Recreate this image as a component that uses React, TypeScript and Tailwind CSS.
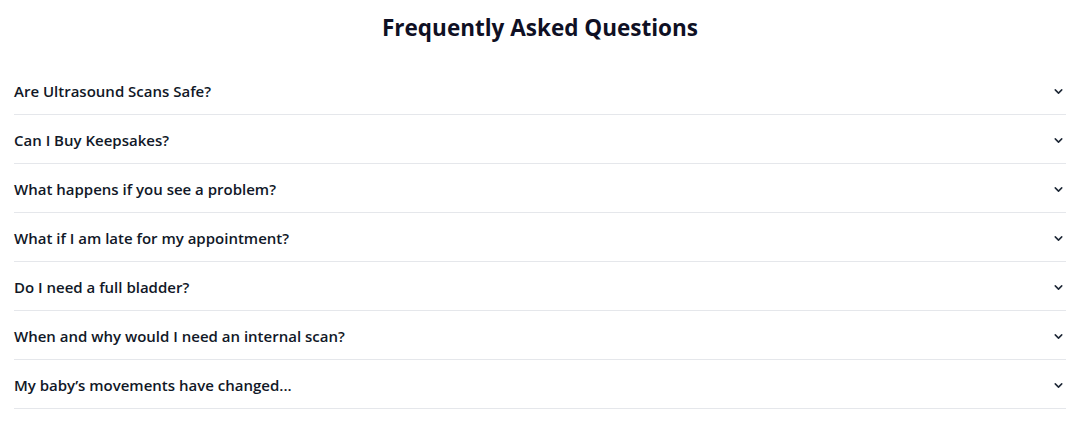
import React from "react";

const questions = [
  "Are Ultrasound Scans Safe?",
  "Can I Buy Keepsakes?",
  "What happens if you see a problem?",
  "What if I am late for my appointment?",
  "Do I need a full bladder?",
  "When and why would I need an internal scan?",
  "My baby\u2019s movements have changed...",
];

function Chevron() {
  return (
    <svg width="13" height="13" viewBox="0 0 24 24" fill="none" stroke="#1f2937" strokeWidth="2.8" strokeLinecap="round" strokeLinejoin="round" className="shrink-0">
      <path d="M6 9l6 6 6-6" />
    </svg>
  );
}

export default function App() {
  return (
    <div className="w-[1080px] h-[429px] bg-white" style={{ fontFamily: '"Open Sans", "Noto Sans", sans-serif' }}>
      <h2 className="pt-[12px] mb-[22px] text-center text-[22.5px] leading-8 font-bold text-[#0f1024]">
        Frequently Asked Questions
      </h2>
      <div className="mx-[14px]">
        {questions.map((q) => (
          <div key={q} className="flex items-center justify-between h-[49px] pt-[3px] border-b border-[#e5e7eb]">
            <span className="text-[15px] font-semibold text-[#111827]">{q}</span>
            <span className="mr-[1px]"><Chevron /></span>
          </div>
        ))}
      </div>
    </div>
  );
}
